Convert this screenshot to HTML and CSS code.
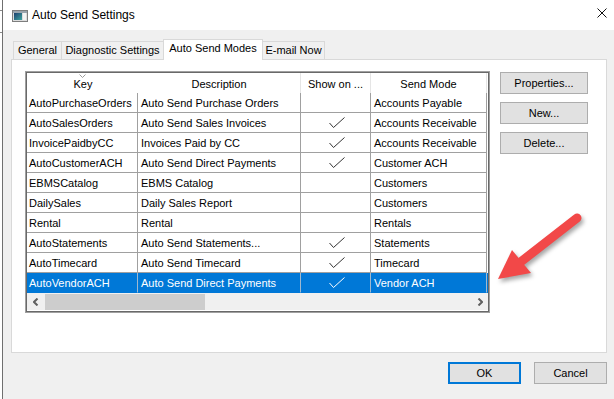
FILE: index.html
```html
<!DOCTYPE html>
<html>
<head>
<meta charset="utf-8">
<link rel="stylesheet" href="styles.css">
</head>
<body>
<div class="screen">
  <div class="behind"></div>
  <div class="window">
    <div class="titlebar">
      <svg class="appicon" width="16" height="12" viewBox="0 0 16 12">
        <defs>
          <linearGradient id="ig" x1="0" y1="0" x2="1" y2="1">
            <stop offset="0" stop-color="#1d3f6e"/>
            <stop offset="1" stop-color="#3fa5a0"/>
          </linearGradient>
        </defs>
        <rect x="0.5" y="0.5" width="15" height="11" fill="#dcdcdc" stroke="#7d7d7d"/>
        <rect x="1" y="1" width="14" height="2" fill="#9aa4ad"/>
        <rect x="2" y="3" width="8" height="7" fill="url(#ig)"/>
        <rect x="11" y="3" width="3" height="7" fill="#f4f4f4"/>
      </svg>
      <span class="title">Auto Send Settings</span>
      <svg class="close" width="10" height="10" viewBox="0 0 10 10">
        <path d="M0.5 0.5L9.5 9.5M9.5 0.5L0.5 9.5" stroke="#111" stroke-width="1"/>
      </svg>
    </div>
    <div class="client">
      <div class="tabs">
        <div class="tab w-general">General</div>
        <div class="tab w-diag">Diagnostic Settings</div>
        <div class="tab tab-active w-auto">Auto Send Modes</div>
        <div class="tab w-email">E-mail Now</div>
      </div>
      <div class="panel">
        <div class="listview">
          <div class="listinner">
            <div class="row head">
              <div class="cell hcell keyhead">Key<svg class="sort" width="7" height="4" viewBox="0 0 7 4"><path d="M0.5 0.5L3.5 3.5L6.5 0.5" fill="none" stroke="#9a9a9a"/></svg></div>
              <div class="cell hcell">Description</div>
              <div class="cell hcell">Show on ...</div>
              <div class="cell hcell">Send Mode</div>
            </div>
            <div class="row"><div class="cell">AutoPurchaseOrders</div><div class="cell">Auto Send Purchase Orders</div><div class="cell chk"></div><div class="cell">Accounts Payable</div></div>
            <div class="row"><div class="cell">AutoSalesOrders</div><div class="cell">Auto Send Sales Invoices</div><div class="cell chk"><svg class="check" width="16" height="11" viewBox="0 0 16 11"><path d="M0.5 6L4.5 10.5L15.5 0.5" fill="none" stroke="#333" stroke-width="1"/></svg></div><div class="cell">Accounts Receivable</div></div>
            <div class="row"><div class="cell">InvoicePaidbyCC</div><div class="cell">Invoices Paid by CC</div><div class="cell chk"><svg class="check" width="16" height="11" viewBox="0 0 16 11"><path d="M0.5 6L4.5 10.5L15.5 0.5" fill="none" stroke="#333" stroke-width="1"/></svg></div><div class="cell">Accounts Receivable</div></div>
            <div class="row"><div class="cell">AutoCustomerACH</div><div class="cell">Auto Send Direct Payments</div><div class="cell chk"><svg class="check" width="16" height="11" viewBox="0 0 16 11"><path d="M0.5 6L4.5 10.5L15.5 0.5" fill="none" stroke="#333" stroke-width="1"/></svg></div><div class="cell">Customer ACH</div></div>
            <div class="row"><div class="cell">EBMSCatalog</div><div class="cell">EBMS Catalog</div><div class="cell chk"></div><div class="cell">Customers</div></div>
            <div class="row"><div class="cell">DailySales</div><div class="cell">Daily Sales Report</div><div class="cell chk"></div><div class="cell">Customers</div></div>
            <div class="row"><div class="cell">Rental</div><div class="cell">Rental</div><div class="cell chk"></div><div class="cell">Rentals</div></div>
            <div class="row"><div class="cell">AutoStatements</div><div class="cell">Auto Send Statements...</div><div class="cell chk"><svg class="check" width="16" height="11" viewBox="0 0 16 11"><path d="M0.5 6L4.5 10.5L15.5 0.5" fill="none" stroke="#333" stroke-width="1"/></svg></div><div class="cell">Statements</div></div>
            <div class="row"><div class="cell">AutoTimecard</div><div class="cell">Auto Send Timecard</div><div class="cell chk"><svg class="check" width="16" height="11" viewBox="0 0 16 11"><path d="M0.5 6L4.5 10.5L15.5 0.5" fill="none" stroke="#333" stroke-width="1"/></svg></div><div class="cell">Timecard</div></div>
            <div class="row selected"><div class="cell">AutoVendorACH</div><div class="cell">Auto Send Direct Payments</div><div class="cell chk"><svg class="check" width="16" height="11" viewBox="0 0 16 11"><path d="M0.5 6L4.5 10.5L15.5 0.5" fill="none" stroke="#fff" stroke-width="1"/></svg></div><div class="cell">Vendor ACH</div></div>
            <div class="hscroll">
              <div class="sbtn"><svg width="6" height="8" viewBox="0 0 6 8"><path d="M4.5 0.5L1 4L4.5 7.5" fill="none" stroke="#606060" stroke-width="2"/></svg></div>
              <div class="thumb"></div>
              <div class="track"></div>
              <div class="sbtn"><svg width="6" height="8" viewBox="0 0 6 8"><path d="M1.5 0.5L5 4L1.5 7.5" fill="none" stroke="#606060" stroke-width="2"/></svg></div>
            </div>
          </div>
        </div>
        <div class="sidebtns">
          <button class="btn side">Properties...</button>
          <button class="btn side">New...</button>
          <button class="btn side">Delete...</button>
        </div>
      </div>
      <div class="footer">
        <button class="btn foot ok">OK</button>
        <button class="btn foot">Cancel</button>
      </div>
    </div>
  </div>
  <svg class="arrow" width="100" height="90" viewBox="0 0 100 90">
    <g class="arrowshape">
      <path d="M89 13L30 59" stroke="#f24848" stroke-width="9" stroke-linecap="round" fill="none"/>
      <polygon points="10,74 24,45 43,68" fill="#f24848"/>
    </g>
  </svg>
</div>
</body>
</html>
```

FILE: styles.css
```css
* {
  box-sizing: border-box;
}

html, body {
  margin: 0;
  padding: 0;
}

body {
  width: 614px;
  height: 399px;
  overflow: hidden;
  background: #ffffff;
  font-family: "Liberation Sans", Arial, sans-serif;
  color: #000;
}

.screen {
  display: flex;
  height: 399px;
  position: relative;
}

.behind {
  width: 2px;
  background:
    linear-gradient(to bottom, transparent 10px, #8a8a8a 10px, #8a8a8a 11px, transparent 11px,
      transparent 32px, #8a8a8a 32px, #8a8a8a 33px, transparent 33px);
}

.window {
  flex: 1;
  display: flex;
  flex-direction: column;
  border-left: 1px solid #6f6f6f;
  background: #f0f0f0;
}

.titlebar {
  height: 30px;
  background: #ffffff;
  display: flex;
  align-items: center;
  padding-left: 9px;
  padding-right: 7px;
  flex: none;
}

.appicon {
  margin-right: 4px;
  margin-top: 1px;
}

.title {
  flex: 1;
  font-size: 12px;
  margin-top: -1px;
}

.close {
  margin-top: -4px;
}

.client {
  flex: 1;
  display: flex;
  flex-direction: column;
  padding: 9px 7px 0 8px;
}

.tabs {
  display: flex;
  align-items: flex-end;
  height: 20px;
  padding-left: 2px;
  position: relative;
  z-index: 2;
}

.tab {
  height: 18px;
  border: 1px solid #d9d9d9;
  border-bottom: none;
  background: #f0f0f0;
  font-size: 11px;
  text-align: center;
  line-height: 17px;
  margin-left: -1px;
}

.tab:first-child {
  margin-left: 0;
}

.w-general { width: 49px; }
.w-diag { width: 103px; }
.w-auto { width: 100px; }
.w-email { width: 63px; }

.tab-active {
  height: 21px;
  margin-bottom: -1px;
  background: #ffffff;
  line-height: 17px;
}

.panel {
  height: 294px;
  border: 1px solid #d9d9d9;
  background: #ffffff;
  display: flex;
  align-items: flex-start;
  padding: 11px 0 0 13px;
}

.listview {
  width: 465px;
  height: 242px;
  border: 1px solid #a0a0a0;
  flex: none;
}

.listinner {
  height: 100%;
  border: 1px solid #696969;
  background: #fff;
  display: flex;
  flex-direction: column;
}

.row {
  display: grid;
  grid-template-columns: 111px 163px 70px 116px;
  height: 20px;
  font-size: 11px;
}

.cell {
  border-right: 1px solid #a0a0a0;
  border-bottom: 1px solid #a0a0a0;
  padding-left: 3px;
  padding-top: 1px;
  line-height: 19px;
  white-space: nowrap;
  overflow: hidden;
}

.row .cell:first-child {
  padding-left: 2px;
}

.head .hcell {
  border-bottom: none;
  border-right: 1px solid #e5e5e5;
  text-align: center;
  padding-left: 0;
  padding-top: 0;
  line-height: 22px;
}

.head .keyhead {
  border-right-color: #ffffff;
  position: relative;
}

.sort {
  position: absolute;
  left: 52px;
  top: 1px;
}

.chk {
  display: flex;
  align-items: center;
  justify-content: center;
  padding-left: 2px;
  padding-top: 0;
}

.selected {
  background: #0078d7;
  color: #ffffff;
}

.selected .cell {
  border-bottom-color: #0078d7;
  border-right-color: #9fb8cf;
}

.hscroll {
  height: 17px;
  display: flex;
  background: #f0f0f0;
  width: 461px;
}

.sbtn {
  width: 17px;
  height: 17px;
  display: flex;
  align-items: center;
  justify-content: center;
}

.thumb {
  width: 160px;
  margin: 1px 0 0 1px;
  height: 16px;
  background: #cdcdcd;
}

.track {
  flex: 1;
}

.sidebtns {
  display: flex;
  flex-direction: column;
  gap: 8px;
  margin-left: 10px;
  margin-top: 1px;
}

.btn {
  font-family: "Liberation Sans", Arial, sans-serif;
  font-size: 11px;
  color: #000;
  background: #e1e1e1;
  border: 1px solid #adadad;
  padding: 0;
  margin: 0;
  height: 22px;
  text-align: center;
}

.side {
  width: 88px;
}

.footer {
  display: flex;
  justify-content: flex-end;
  gap: 13px;
  margin-top: 9px;
}

.foot {
  width: 73px;
}

.ok {
  border: 2px solid #0078d7;
}

.arrow {
  position: absolute;
  left: 488px;
  top: 205px;
}

.arrowshape {
  filter: drop-shadow(2px 3px 2px rgba(0, 0, 0, 0.35));
}
```
